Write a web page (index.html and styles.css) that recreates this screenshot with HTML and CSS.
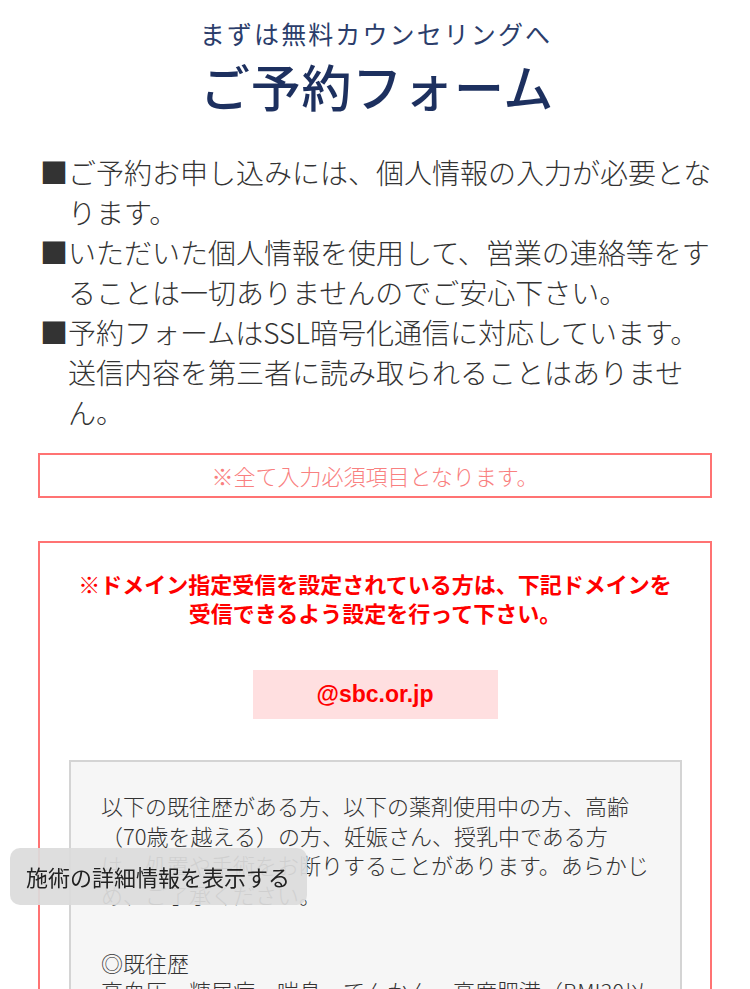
FILE: index.html
```html
<!DOCTYPE html>
<html lang="ja">
<head>
<meta charset="utf-8">
<title>ご予約フォーム</title>
<link rel="stylesheet" href="styles.css">
</head>
<body>
<header class="hero">
  <p class="hero-sub">まずは無料カウンセリングへ</p>
  <h1 class="hero-title">ご予約フォーム</h1>
</header>

<ul class="notes">
  <li>■ご予約お申し込みには、個人情報の入力が必要となります。</li>
  <li>■いただいた個人情報を使用して、営業の連絡等をすることは一切ありませんのでご安心下さい。</li>
  <li>■予約フォームはSSL暗号化通信に対応しています。送信内容を第三者に読み取られることはありません。</li>
</ul>

<div class="required">※全て入力必須項目となります。</div>

<section class="domain">
  <p class="domain-lead">※ドメイン指定受信を設定されている方は、下記ドメインを<br>受信できるよう設定を行って下さい。</p>
  <div class="domain-name">@sbc.or.jp</div>
  <div class="caution">
    <p>以下の既往歴がある方、以下の薬剤使用中の方、高齢<br>（70歳を越える）の方、妊娠さん、授乳中である方<br>は、処置や手術をお断りすることがあります。あらかじ<br>め、ご了承ください。</p>
    <p class="caution-head">◎既往歴<br>高血圧、糖尿病、喘息、てんかん、高度肥満（BMI30以上）、心臓疾患、腎臓疾患、肝臓疾患、血液疾患</p>
  </div>
</section>

<div class="toast">施術の詳細情報を表示する</div>
</body>
</html>
```

FILE: styles.css
```css
html, body {
  margin: 0;
  padding: 0;
  background: #ffffff;
}

body {
  font-family: "Noto Sans CJK JP", "Noto Sans", sans-serif;
  font-weight: 300;
  color: #333333;
  overflow: hidden;
  height: 989px;
}

.hero {
  padding-top: 18px;
  text-align: center;
}

.hero-sub {
  margin: 0;
  padding-left: 2px;
  font-size: 25px;
  line-height: 30px;
  letter-spacing: 2.1px;
  color: #2b3d6b;
  font-weight: 400;
}

.hero-title {
  margin: 9px 0 0;
  padding-left: 4px;
  font-size: 50px;
  line-height: 56px;
  font-weight: 500;
  letter-spacing: 0.8px;
  color: #1d305f;
}

.notes {
  list-style: none;
  margin: 39px 0 0;
  padding: 0 36px 0 40px;
  font-size: 28px;
  line-height: 40px;
  color: #333333;
}

.notes li {
  padding-left: 28px;
  text-indent: -28px;
}

.required {
  margin: 21px 38px 0;
  border: 2px solid #ff7373;
  height: 41px;
  line-height: 41px;
  text-align: center;
  font-size: 22px;
  color: #f98080;
}

.domain {
  margin: 43px 38px 0;
  border: 2px solid #ff7373;
  border-bottom: none;
  padding-top: 26px;
}

.domain-lead {
  margin: 0;
  text-align: center;
  font-size: 22px;
  line-height: 29px;
  font-weight: 700;
  color: #ff0000;
}

.domain-name {
  margin: 43px auto 0;
  width: 245px;
  height: 49px;
  line-height: 49px;
  background: #ffdfe0;
  color: #ff0000;
  text-align: center;
  font-family: "Liberation Sans", Arial, sans-serif;
  font-weight: 700;
  font-size: 23px;
}

.caution {
  margin: 41px 28px 0 29px;
  border: 2px solid #d4d4d4;
  background: #f6f6f6;
  padding: 29px 28px 29px 30px;
  font-size: 22px;
  line-height: 29.5px;
  color: #333333;
}

.caution p {
  margin: 0;
}

.caution .caution-head {
  margin-top: 39px;
  line-height: 28px;
}

.toast {
  position: fixed;
  left: 10px;
  top: 848px;
  width: 281px;
  height: 57px;
  padding-left: 16px;
  border-radius: 10px;
  background: rgba(220, 220, 220, 0.93);
  color: #222222;
  font-size: 22px;
  font-weight: 400;
  line-height: 57px;
}
```
